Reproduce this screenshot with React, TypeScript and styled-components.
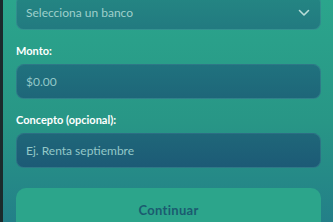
import React from "react";
import styled, { createGlobalStyle } from "styled-components";

const Global = createGlobalStyle`
  html, body { margin: 0; padding: 0; height: 100%; }
  body { background: #1b2a2c; overflow: hidden; font-family: Lato, "Noto Sans", sans-serif; }
  #root { height: 100%; }
`;

const Page = styled.div`
  margin-left: 3px;
  height: 100%;
  background: linear-gradient(180deg, #2ba58c 0%, #289686 55%, #237f88 100%);
  padding: 0 12px 0 13px;
  display: flex;
  flex-direction: column;
  overflow: hidden;
`;

const Form = styled.div`
  margin-top: -5px;
  display: flex;
  flex-direction: column;
`;

const Field = styled.div<{ $gap?: number }>`
  display: flex;
  flex-direction: column;
  gap: 6px;
  margin-top: ${(p) => p.$gap ?? 0}px;
`;

const Label = styled.label`
  color: #ffffff;
  font-weight: 700;
  font-size: 11px;
  line-height: 14px;
`;

const Box = styled.div`
  height: 35px;
  box-sizing: border-box;
  border-radius: 8px;
  border: 1px solid rgba(120, 200, 200, 0.18);
  display: flex;
  align-items: center;
  padding: 0 10px 0 9px;
  color: #93c8c8;
  font-size: 12px;
`;

const SelectBox = styled(Box)`
  background: linear-gradient(180deg, #248683 0%, #227a80 100%);
  justify-content: space-between;
  color: #9fd0cc;
`;

const InputBox = styled(Box)<{ $dark?: boolean }>`
  background: ${(p) =>
    p.$dark
      ? "linear-gradient(180deg, #1f6779 0%, #1c5a76 100%)"
      : "linear-gradient(180deg, #20727e 0%, #1e6679 100%)"};
`;

const Button = styled.button`
  margin-top: 20px;
  height: 44px;
  border: none;
  border-radius: 10px;
  background: #2ca58b;
  color: #1b5b70;
  font-family: Lato, "Noto Sans", sans-serif;
  font-weight: 700;
  font-size: 13px;
  letter-spacing: 0.3px;
  padding-top: 0;
`;

export default function App() {
  return (
    <>
      <Global />
      <Page>
        <Form>
          <SelectBox>
            <span>Selecciona un banco</span>
            <svg width="12" height="8" viewBox="0 0 12 8" fill="none">
              <path d="M1.5 1.5 L6 6 L10.5 1.5" stroke="#b8dcd8" strokeWidth="1.6" strokeLinecap="round" strokeLinejoin="round" />
            </svg>
          </SelectBox>
          <Field $gap={14}>
            <Label>Monto:</Label>
            <InputBox>$0.00</InputBox>
          </Field>
          <Field $gap={14}>
            <Label>Concepto (opcional):</Label>
            <InputBox $dark>Ej. Renta septiembre</InputBox>
          </Field>
          <Button>Continuar</Button>
        </Form>
      </Page>
    </>
  );
}
